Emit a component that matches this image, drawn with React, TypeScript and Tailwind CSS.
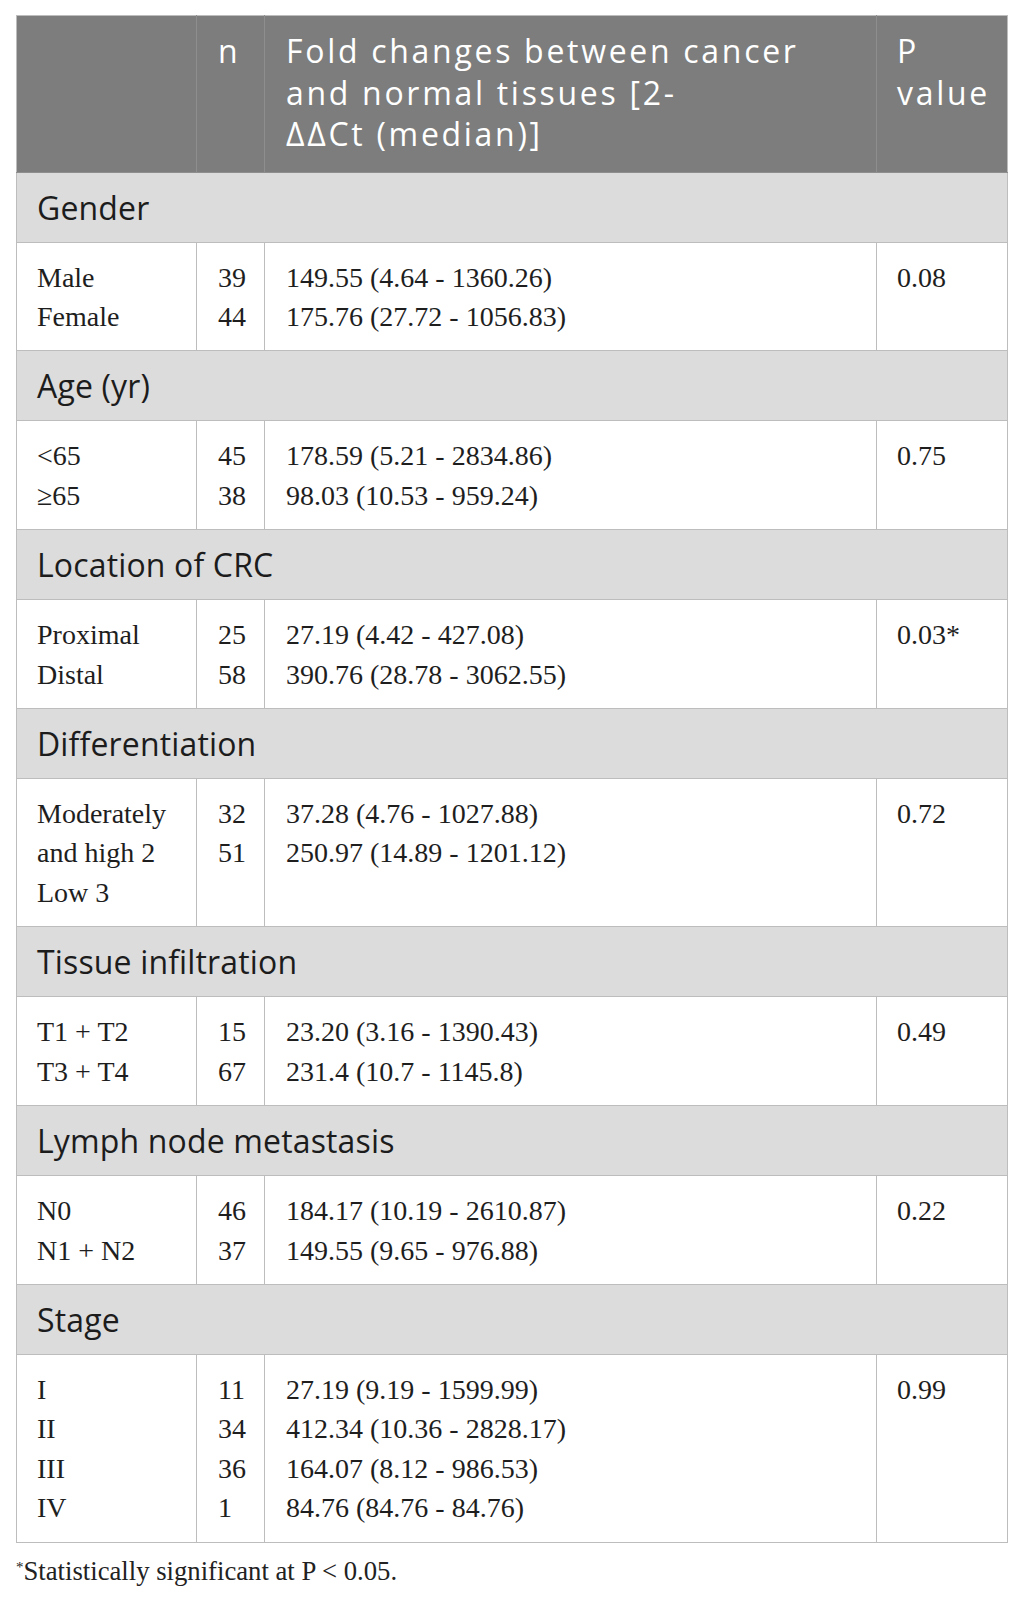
type Group = {
  title: string;
  labels: string[];
  ns: string[];
  values: string[];
  p: string;
};

const groups: Group[] = [
  {
    title: 'Gender',
    labels: ['Male', 'Female'],
    ns: ['39', '44'],
    values: ['149.55 (4.64 - 1360.26)', '175.76 (27.72 - 1056.83)'],
    p: '0.08',
  },
  {
    title: 'Age (yr)',
    labels: ['<65', '≥65'],
    ns: ['45', '38'],
    values: ['178.59 (5.21 - 2834.86)', '98.03 (10.53 - 959.24)'],
    p: '0.75',
  },
  {
    title: 'Location of CRC',
    labels: ['Proximal', 'Distal'],
    ns: ['25', '58'],
    values: ['27.19 (4.42 - 427.08)', '390.76 (28.78 - 3062.55)'],
    p: '0.03*',
  },
  {
    title: 'Differentiation',
    labels: ['Moderately', 'and high 2', 'Low 3'],
    ns: ['32', '51'],
    values: ['37.28 (4.76 - 1027.88)', '250.97 (14.89 - 1201.12)'],
    p: '0.72',
  },
  {
    title: 'Tissue infiltration',
    labels: ['T1 + T2', 'T3 + T4'],
    ns: ['15', '67'],
    values: ['23.20 (3.16 - 1390.43)', '231.4 (10.7 - 1145.8)'],
    p: '0.49',
  },
  {
    title: 'Lymph node metastasis',
    labels: ['N0', 'N1 + N2'],
    ns: ['46', '37'],
    values: ['184.17 (10.19 - 2610.87)', '149.55 (9.65 - 976.88)'],
    p: '0.22',
  },
  {
    title: 'Stage',
    labels: ['I', 'II', 'III', 'IV'],
    ns: ['11', '34', '36', '1'],
    values: [
      '27.19 (9.19 - 1599.99)',
      '412.34 (10.36 - 2828.17)',
      '164.07 (8.12 - 986.53)',
      '84.76 (84.76 - 84.76)',
    ],
    p: '0.99',
  },
];

const sans = "font-['Open_Sans','Lato',sans-serif]";
const serif = "font-['Liberation_Serif','Times_New_Roman',serif]";

function Lines({ items }: { items: string[] }) {
  return (
    <>
      {items.map((t, i) => (
        <div key={i}>{t}</div>
      ))}
    </>
  );
}

export default function App() {
  return (
    <div className="min-h-screen bg-white pl-[16px] pr-[19px] pt-[15px]">
      <table className="w-[991px] table-fixed border-collapse">
        <colgroup>
          <col className="w-[180px]" />
          <col className="w-[68px]" />
          <col className="w-[612px]" />
          <col className="w-[131px]" />
        </colgroup>
        <thead>
          <tr
            className={`bg-[#7c7d7c] text-left align-top text-[32px] font-normal leading-[41.5px] tracking-[2.7px] text-white ${sans}`}
          >
            <th className="border border-[#8e8e8e] border-l-[#bdbdbd] border-t-[#bdbdbd] px-[20px] pb-[17px] pt-[14px] font-normal"></th>
            <th className="border border-[#8e8e8e] border-t-[#bdbdbd] px-[21px] pb-[17px] pt-[14px] font-normal">
              n
            </th>
            <th className="whitespace-nowrap border border-[#8e8e8e] border-t-[#bdbdbd] px-[21px] pb-[17px] pt-[14px] font-normal">
              Fold changes between cancer
              <br />
              and normal tissues [2-
              <br />
              ΔΔCt (median)]
            </th>
            <th className="whitespace-nowrap border border-[#8e8e8e] border-r-[#bdbdbd] border-t-[#bdbdbd] px-[20px] pb-[17px] pt-[14px] font-normal">
              P<br />
              value
            </th>
          </tr>
        </thead>
        <tbody>
          {groups.map((g) => (
            <GroupRows key={g.title} g={g} />
          ))}
        </tbody>
      </table>
      <p className={`mt-[15px] text-[26.7px] leading-[26px] text-[#222] ${serif}`}>
        <sup className="text-[15px]">*</sup>Statistically significant at P &lt; 0.05.
      </p>
    </div>
  );
}

function GroupRows({ g }: { g: Group }) {
  const cell = 'border border-[#bdbdbd] pb-[14.3px] pt-[15px] align-top';
  return (
    <>
      <tr className="bg-[#dcdcdc]">
        <td
          colSpan={4}
          className={`border border-[#bdbdbd] px-[20px] py-[14px] text-[32px] leading-[41px] tracking-[0.15px] text-[#1c1c1c] ${sans}`}
        >
          {g.title}
        </td>
      </tr>
      <tr className={`bg-white text-[28px] leading-[39.3px] text-[#1e1e1e] ${serif}`}>
        <td className={`${cell} pl-[20px] pr-[4px]`}>
          <Lines items={g.labels} />
        </td>
        <td className={`${cell} pl-[21px] pr-[4px]`}>
          <Lines items={g.ns} />
        </td>
        <td className={`${cell} px-[21px]`}>
          <Lines items={g.values} />
        </td>
        <td className={`${cell} px-[20px]`}>{g.p}</td>
      </tr>
    </>
  );
}
